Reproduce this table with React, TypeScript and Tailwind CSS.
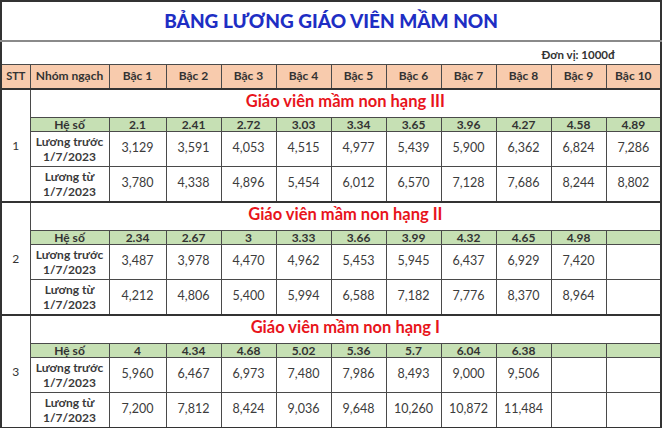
import React from 'react'

type Section = {
  stt: number
  title: string
  heSo: string[]
  truoc: string[]
  tu: string[]
}

const sections: Section[] = [
  {
    stt: 1,
    title: 'Giáo viên mầm non hạng III',
    heSo: ['2.1', '2.41', '2.72', '3.03', '3.34', '3.65', '3.96', '4.27', '4.58', '4.89'],
    truoc: ['3,129', '3,591', '4,053', '4,515', '4,977', '5,439', '5,900', '6,362', '6,824', '7,286'],
    tu: ['3,780', '4,338', '4,896', '5,454', '6,012', '6,570', '7,128', '7,686', '8,244', '8,802'],
  },
  {
    stt: 2,
    title: 'Giáo viên mầm non hạng II',
    heSo: ['2.34', '2.67', '3', '3.33', '3.66', '3.99', '4.32', '4.65', '4.98', ''],
    truoc: ['3,487', '3,978', '4,470', '4,962', '5,453', '5,945', '6,437', '6,929', '7,420', ''],
    tu: ['4,212', '4,806', '5,400', '5,994', '6,588', '7,182', '7,776', '8,370', '8,964', ''],
  },
  {
    stt: 3,
    title: 'Giáo viên mầm non hạng I',
    heSo: ['4', '4.34', '4.68', '5.02', '5.36', '5.7', '6.04', '6.38', '', ''],
    truoc: ['5,960', '6,467', '6,973', '7,480', '7,986', '8,493', '9,000', '9,506', '', ''],
    tu: ['7,200', '7,812', '8,424', '9,036', '9,648', '10,260', '10,872', '11,484', '', ''],
  },
]

const bac = Array.from({ length: 10 }, (_, i) => `Bậc ${i + 1}`)

const cell = 'border border-[#4a4a4a] text-center align-middle p-0'

function SectionRows({ s }: { s: Section }) {
  return (
    <>
      <tr className="h-[28px]">
        <td rowSpan={4} className="border border-[#4a4a4a] border-t-2 border-t-[#333] text-center align-middle text-[12px] text-[#333]">
          {s.stt}
        </td>
        <td colSpan={11} className="border border-[#4a4a4a] border-t-2 border-t-[#333] text-center align-middle pb-[4px] text-[16.5px] font-bold text-[#e8141b] leading-none">
          {s.title}
        </td>
      </tr>
      <tr className="h-[14px] bg-[#c6e0b4]">
        <td className={`${cell} text-[12px] font-bold text-[#333] leading-[13px]`}>Hệ số</td>
        {s.heSo.map((v, i) => (
          <td key={i} className={`${cell} text-[12px] font-bold text-[#333] leading-[13px]`}>{v}</td>
        ))}
      </tr>
      <tr className="h-[35px]">
        <td className={`${cell} text-[12px] font-bold text-[#3a3a3a] leading-[15px]`}>
          Lương trước
          <br />
          1/7/2023
        </td>
        {s.truoc.map((v, i) => (
          <td key={i} className={`${cell} text-[12.5px] text-[#3c3c3c]`}>{v}</td>
        ))}
      </tr>
      <tr className="h-[36px]">
        <td className={`${cell} text-[12px] font-bold text-[#3a3a3a] leading-[15px]`}>
          Lương từ
          <br />
          1/7/2023
        </td>
        {s.tu.map((v, i) => (
          <td key={i} className={`${cell} text-[12.5px] text-[#3c3c3c]`}>{v}</td>
        ))}
      </tr>
    </>
  )
}

export default function App() {
  return (
    <div className="w-[665px] h-[428px] bg-white overflow-hidden font-['Lato','Noto_Sans',sans-serif]">
      <table className="table-fixed border-collapse w-[662px] border-2 border-[#333]">
        <colgroup>
          <col className="w-[29px]" />
          <col className="w-[79px]" />
          <col className="w-[57px]" />
          {Array.from({ length: 9 }, (_, i) => (
            <col key={i} className="w-[55px]" />
          ))}
        </colgroup>
        <tbody>
          <tr className="h-[40px]">
            <td colSpan={12} className="border-b-2 border-b-[#8a8a8a] text-center align-middle text-[19px] font-black text-[#1e2ec4]">
              BẢNG LƯƠNG GIÁO VIÊN MẦM NON
            </td>
          </tr>
          <tr className="h-[23px]">
            <td colSpan={9} />
            <td colSpan={3} className="text-center align-bottom pb-[0px] text-[11.5px] font-bold text-[#333]">
              Đơn vị: 1000đ
            </td>
          </tr>
          <tr className="h-[25px] bg-[#f8cbad]">
            <td className={`${cell} text-[11px] font-bold text-[#333]`}>STT</td>
            <td className={`${cell} text-[12px] font-bold text-[#333] whitespace-nowrap`}>Nhóm ngạch</td>
            {bac.map((b) => (
              <td key={b} className={`${cell} text-[12px] font-bold text-[#333]`}>{b}</td>
            ))}
          </tr>
          {sections.map((s) => (
            <SectionRows key={s.stt} s={s} />
          ))}
        </tbody>
      </table>
    </div>
  )
}
